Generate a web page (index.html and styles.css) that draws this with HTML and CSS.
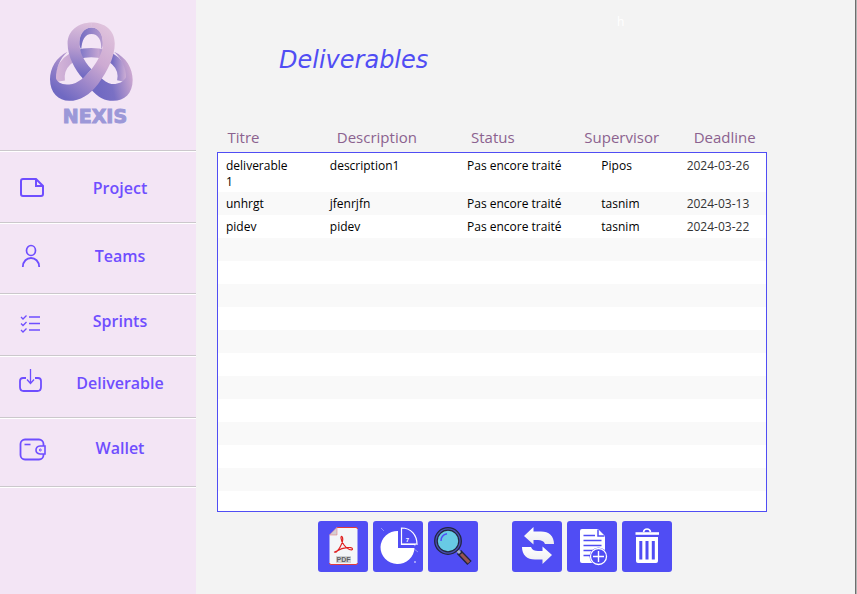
FILE: index.html
```html
<!DOCTYPE html>
<html lang="en">
<head>
<meta charset="utf-8">
<title>Nexis - Deliverables</title>
<link rel="stylesheet" href="styles.css">
</head>
<body>
<aside class="sidebar">
  <div class="brand">
    <svg class="brand-mark" viewBox="60 36 250 240" aria-hidden="true">
      <defs>
        <linearGradient id="strand" gradientUnits="userSpaceOnUse" x1="240" y1="60" x2="95" y2="255"><stop offset="0" stop-color="#dfc2dc"/><stop offset=".4" stop-color="#cdaad2"/><stop offset=".7" stop-color="#9f88ca"/><stop offset="1" stop-color="#7069c2"/></linearGradient>
        <linearGradient id="under" gradientUnits="userSpaceOnUse" x1="205" y1="240" x2="309" y2="215"><stop offset="0" stop-color="#7069c2"/><stop offset=".4" stop-color="#7a70c4"/><stop offset="1" stop-color="#c9a6d0"/></linearGradient>
        <linearGradient id="left-strand" gradientUnits="userSpaceOnUse" x1="185" y1="37" x2="160" y2="200"><stop offset="0" stop-color="#dfc2dc"/><stop offset=".5" stop-color="#b79bcf"/><stop offset="1" stop-color="#7069c2"/></linearGradient>
        <linearGradient id="back" gradientUnits="userSpaceOnUse" x1="80" y1="0" x2="290" y2="0"><stop offset="0" stop-color="#d5b5d8"/><stop offset=".25" stop-color="#c3a4d2"/><stop offset=".35" stop-color="#8279c8"/><stop offset=".6" stop-color="#c3a4d2"/><stop offset=".8" stop-color="#756cc3"/><stop offset="1" stop-color="#cfafd5"/></linearGradient>
        <linearGradient id="arch" x1="0" y1="0" x2="1" y2="0"><stop offset="0" stop-color="#7069c2"/><stop offset="1" stop-color="#b79ccf"/></linearGradient>
      </defs>
      <path d="M91 214C84 166 122 128 184 128S286 166 276 214" fill="none" stroke="url(#back)" stroke-width="28"/>
      <path d="M185 240C205 262 225 273 250 273C285 273 309 250 309 210C309 175 290 142 253 125C275 145 290 175 289 202C280 218 262 224 245 222C232 219 222 212 212 202Z" fill="url(#under)"/>
      <path d="M148 105C146 72 162 52 185 52S222 72 219 108L214 118C216 90 205 72 185 72S156 90 154 120Z" fill="url(#arch)"/>
      <path d="M113 125C90 145 78 175 78 205C82 220 100 224 118 224C145 222 165 200 185 178C205 150 219 128 219 100C219 70 205 52 185 52L185 37C225 37 255 60 255 100C255 140 235 180 205 222C180 255 150 273 118 273C85 273 60 248 60 208C60 175 78 142 113 125Z" fill="url(#strand)"/>
      <path d="M186 37C145 37 113 62 113 100C113 138 134 178 159 206L185 178C158 147 149 125 149 100C149 72 164 52 186 52Z" fill="url(#left-strand)"/>
    </svg>
    <span class="brand-name">NEXIS</span>
  </div>
  <nav>
    <ul class="menu">
      <li class="item item-project"><a href="#project">
        <svg class="nav-icon" viewBox="0 0 28 28" aria-hidden="true"><path d="M3 7Q3 5 5 5H18L25 12V20Q25 22 23 22H5Q3 22 3 20ZM18 5V12H25" stroke-width="2"/></svg>
        <span>Project</span></a></li>
      <li class="item item-teams"><a href="#teams">
        <svg class="nav-icon" viewBox="0 0 28 28" aria-hidden="true"><ellipse cx="13" cy="8.500" rx="4.500" ry="5" stroke-width="1.700"/><path d="M4.800 25C5 13 21 13 21.200 25" stroke-width="1.800"/></svg>
        <span>Teams</span></a></li>
      <li class="item item-sprints"><a href="#sprints">
        <svg class="nav-icon" viewBox="0 0 28 28" aria-hidden="true"><path d="M11 10H22M11 16.500H22M11 23H22" stroke-width="1.600"/><path d="M3 10L5 12L8.500 8.500M3 16.500L5 18.500L8.500 15M3 23L5 25L8.500 21.500" stroke-width="1.300"/></svg>
        <span>Sprints</span></a></li>
      <li class="item item-deliverable"><a href="#deliverable">
        <svg class="nav-icon" viewBox="0 0 28 28" aria-hidden="true"><path d="M8 9H5Q2 9 2 12V18Q2 22 5.500 22H19.500Q23 22 23 18V12Q23 9 20 9H17" stroke-width="1.800"/><path d="M12.500 0V14M9 10.500L12.500 14.500L16 10.500" stroke-width="1.300"/></svg>
        <span>Deliverable</span></a></li>
      <li class="item item-wallet"><a href="#wallet">
        <svg class="nav-icon" viewBox="0 0 28 28" aria-hidden="true"><rect x="2.500" y="5.500" width="23" height="20" rx="4.500" stroke-width="1.800"/><path d="M6.500 10.500H12.500" stroke-width="1.600"/><path class="clasp" d="M27 12H22Q18 12.500 18 16T22 20H27Z" stroke-width="1.600"/><circle cx="22.300" cy="16" r="1" stroke-width="1"/></svg>
        <span>Wallet</span></a></li>
    </ul>
  </nav>
</aside>
<main class="content">
  <p class="note">h</p>
  <h1>Deliverables</h1>
  <table class="grid">
    <colgroup><col class="c-title"><col class="c-desc"><col class="c-status"><col class="c-super"><col class="c-date"></colgroup>
    <thead>
      <tr><th scope="col">Titre</th><th scope="col" class="h-desc">Description</th><th scope="col" class="h-status">Status</th><th scope="col">Supervisor</th><th scope="col" class="h-date">Deadline</th></tr>
    </thead>
    <tbody>
      <tr class="first"><td>deliverable<br>1</td><td>description1</td><td>Pas encore traité</td><td class="super">Pipos</td><td class="date">2024-03-26</td></tr>
      <tr><td>unhrgt</td><td>jfenrjfn</td><td>Pas encore traité</td><td class="super">tasnim</td><td class="date">2024-03-13</td></tr>
      <tr><td>pidev</td><td>pidev</td><td>Pas encore traité</td><td class="super">tasnim</td><td class="date">2024-03-22</td></tr>
      <tr><td colspan="5"></td></tr>
      <tr><td colspan="5"></td></tr>
      <tr><td colspan="5"></td></tr>
      <tr><td colspan="5"></td></tr>
      <tr><td colspan="5"></td></tr>
      <tr><td colspan="5"></td></tr>
      <tr><td colspan="5"></td></tr>
      <tr><td colspan="5"></td></tr>
      <tr><td colspan="5"></td></tr>
      <tr><td colspan="5"></td></tr>
      <tr><td colspan="5"></td></tr>
      <tr class="last"><td colspan="5"></td></tr>
    </tbody>
  </table>
  <div class="toolbar">
    <div class="group">
      <button type="button" aria-label="Export PDF">
        <svg viewBox="0 0 50 51" aria-hidden="true"><path d="M19 6.500H38Q39.500 6.500 39.500 8V42Q39.500 43.500 38 43.500H13Q11.500 43.500 11.500 42V14Z" fill="#f4f6f8"/><path d="M19 6.500H38Q39.500 6.500 39.500 8M11.500 42Q11.500 43.500 13 43.500H38Q39.500 43.500 39.500 42" fill="none" stroke="#e03a3e"/><path d="M19 6.500V14H11.500Z" fill="#d5cfd2" stroke="#e58085" stroke-width=".6"/><path d="M16.500 31C19 33 26 21 24.500 16.500C22.500 13 22 19 26 24C29 28.500 34.500 30 34.500 28C34.500 25 24 27 20 29.500C18 30.500 16 31 16.500 31Z" fill="none" stroke="#e02020" stroke-width="1.200"/><rect x="18" y="35" width="15" height="7" fill="#d2d3d5"/><text x="25.500" y="41.300" text-anchor="middle" class="pdf-label">PDF</text></svg>
      </button>
      <button type="button" aria-label="Statistics">
        <svg viewBox="0 0 50 51" aria-hidden="true"><path d="M25 10A17 16.500 0 1 0 41.500 27H25Z" fill="#fff"/><path d="M28.500 7V23.500H44C44 14 38 7 28.500 7Z" fill="none" stroke="#fff" stroke-width="1.200"/><path d="M28 23.200H44" stroke="#fff" stroke-width="1.600"/><text x="34.500" y="21" text-anchor="middle" class="pie-label">7</text><path d="M8 7L11 10M41 25L44 23M41 28L45 31" stroke="#a5a3fa" stroke-width=".8"/><circle cx="42" cy="41" r="1" fill="#b9b8fb"/></svg>
      </button>
      <button type="button" aria-label="Search">
        <svg viewBox="0 0 50 51" aria-hidden="true"><path d="M31 31L41.500 42" stroke="#22253f" stroke-width="6"/><path d="M33 33L41 41.300" stroke="#985452" stroke-width="3.200"/><path d="M29.500 29.500L32 32" stroke="#aab2c4" stroke-width="3"/><circle cx="20" cy="20" r="13.300" fill="#4a4fb5" stroke="#22253f" stroke-width="1.300"/><circle cx="20" cy="20" r="10.800" fill="#68cae5" stroke="#22253f" stroke-width="1.200"/><path d="M13 20Q13 14 19 12.800" fill="none" stroke="#504df4" stroke-width="1.500"/></svg>
      </button>
    </div>
    <div class="group">
      <button type="button" aria-label="Refresh">
        <svg viewBox="0 0 50 51" aria-hidden="true"><defs><linearGradient id="sheen" x1="0" y1="0" x2="0" y2="1"><stop offset="0" stop-color="#fff"/><stop offset="1" stop-color="#ececf0"/></linearGradient></defs><path d="M12 15L21.500 6V10.500H29C37 10.500 42 15 42 23H33C32 20 29 19 26 19H21.500V23.500Z" fill="url(#sheen)"/><path d="M40 34L30.500 43V38.500H23C15 38.500 10 34 10 26H19C20 29 23 30 26 30H30.500V25.500Z" fill="url(#sheen)"/></svg>
      </button>
      <button type="button" aria-label="Add deliverable">
        <svg viewBox="0 0 50 51" aria-hidden="true"><path d="M15 8H31L38 15V28L34 42H15Q13 42 13 40V10Q13 8 15 8Z" fill="#fff"/><path d="M31 8.500V15H37.500" fill="none" stroke="#504df4" stroke-width="1.500"/><path d="M16.500 14.500H28M16.500 19.500H34.500M16.500 24.500H34.500M16.500 29.500H26M16.500 34.500H23" stroke="#504df4" stroke-width="1.500"/><circle cx="31.500" cy="35.500" r="9" fill="#504df4"/><circle cx="31.500" cy="35.500" r="8" fill="#504df4" stroke="#fff" stroke-width="1.300"/><path d="M31.500 30V41M26 35.500H37" stroke="#fff" stroke-width="1.400"/></svg>
      </button>
      <button type="button" aria-label="Delete">
        <svg viewBox="0 0 50 51" aria-hidden="true"><path d="M21.500 11Q22 8 25 8T28.500 11" fill="none" stroke="#fff" stroke-width="1.600"/><path d="M13.500 12.500H37" stroke="#fff" stroke-width="2.600"/><path d="M14 16H36V40Q36 42 34 42H16Q14 42 14 40Z" fill="#fff"/><path d="M18.800 20V38.500M25 20V38.500M31.300 20V38.500" stroke="#504df4" stroke-width="3"/></svg>
      </button>
    </div>
  </div>
</main>
</body>
</html>
```
FILE: styles.css
```css
* { box-sizing: border-box; }

body {
  margin: 0;
  min-height: 100vh;
  display: flex;
  background: #f3f3f3;
  font-family: "Open Sans", "Noto Sans", sans-serif;
  font-size: 12px;
  color: #000;
}

.sidebar {
  flex: none;
  width: 196px;
  background: #f3e5f5;
}

.brand {
  display: flex;
  flex-direction: column;
  align-items: center;
  height: 152px;
  padding: 22px 14px 0 0;
  border-bottom: 1px solid #fff;
  box-shadow: inset 0 -1px #cbc8cc;
}

.brand-mark {
  width: 83px;
  height: 80px;
}

.brand-name {
  margin-top: 4px;
  padding-left: 8px;
  font: bold 19px/20px "DejaVu Sans", sans-serif;
  -webkit-text-stroke: 1px #9c98d8;
  color: #9c98d8;
}

.menu {
  margin: 0;
  padding: 0;
  list-style: none;
}

.item {
  border-bottom: 1px solid #fff;
  box-shadow: inset 0 -1px #cbc8cc;
}

.item a {
  display: flex;
  align-items: center;
  padding: 22px 2px 21px 18px;
  font-size: 16px;
  font-weight: 600;
  line-height: 28px;
  color: #6f4eff;
  text-decoration: none;
}

.item span {
  flex: 1;
  text-align: center;
}

.item-teams a { padding-top: 18px; padding-bottom: 24px; }
.item-sprints a { padding-top: 12px; padding-bottom: 21px; }
.item-deliverable a { padding-top: 12px; padding-bottom: 21px; }
.item-wallet a { padding-top: 15px; padding-bottom: 25px; }

.nav-icon {
  width: 28px;
  height: 28px;
  fill: none;
  stroke: #6f4eff;
}

.clasp { fill: #f3e5f5; }

.content {
  flex: 1;
  padding: 13px 88px 0 21px;
  border-right: 1px solid #b4b4b4;
  box-shadow: inset -1px 0 #6e6e6e;
}

.note {
  margin: 0 1px 0 400px;
  line-height: 18px;
  color: #fff;
}

h1 {
  margin: 13px 0 0 62px;
  font: italic 24px/32px "DejaVu Sans", sans-serif;
  color: #504df4;
}

.grid {
  width: calc(100% - 1px);
  margin-top: 48px;
  border-collapse: collapse;
  table-layout: fixed;
}

.c-title { width: 19%; }
.c-desc { width: 25%; }
.c-status { width: 21%; }
.c-super { width: 19%; }
.c-date { width: 16%; }

.grid th {
  height: 28px;
  padding: 0 0 2px 10px;
  font-size: 15px;
  font-weight: 400;
  line-height: 24px;
  text-align: left;
  color: #8b628f;
}

.grid .h-desc { padding-left: 15px; }
.grid .h-status { padding-left: 12px; }
.grid .h-date { padding-left: 15px; }

.grid tbody {
  border: 1px solid #504df4;
  background: #fff;
}

.grid td {
  height: 23px;
  padding: 4px 0 3px 8px;
  line-height: 16px;
  vertical-align: top;
}

.grid .first td { height: 39px; padding-top: 5px; padding-bottom: 2px; }
.grid .last td { height: 21px; }
.grid td.super { padding-left: 27px; }
.grid td.date { color: #333; }
.grid tbody tr:nth-child(even) { background: #f9f9f9; }

.toolbar {
  display: flex;
  justify-content: center;
  gap: 34px;
  margin-top: 9px;
  padding-left: 5px;
}

.group {
  display: flex;
  gap: 5px;
}

.toolbar button {
  width: 50px;
  height: 51px;
  padding: 0;
  border: 0;
  border-radius: 3px;
  background: #504df4;
}

.toolbar svg {
  display: block;
  width: 50px;
  height: 51px;
}

.pdf-label {
  font: bold 7px "Liberation Sans", sans-serif;
  fill: #606164;
}

.pie-label {
  font: bold 6px "Liberation Sans", sans-serif;
  fill: #fff;
}
```
